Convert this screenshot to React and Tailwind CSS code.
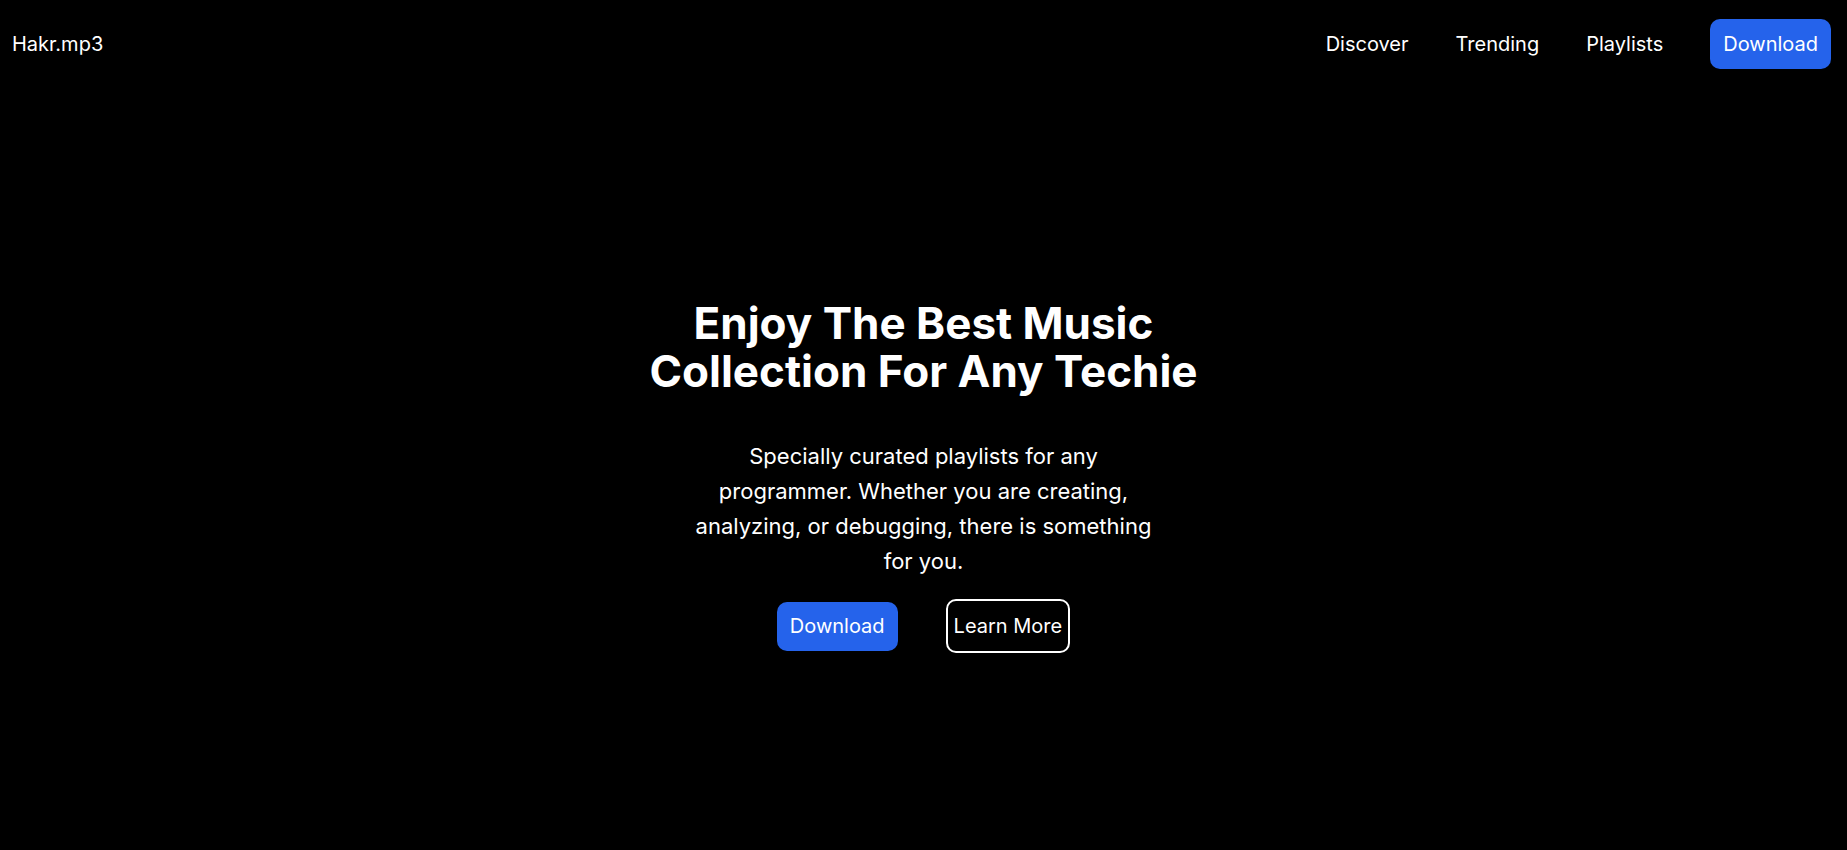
export default function App() {
  return (
    <div
      className="min-h-screen flex flex-col bg-black text-white"
      style={{ fontFamily: 'Inter, "Noto Sans", sans-serif' }}
    >
      {/* Header */}
      <header className="flex items-center justify-between pl-3 pr-4 py-[19px]">
        <a href="#" className="text-xl">Hakr.mp3</a>
        <nav className="flex items-center gap-[47px] text-xl">
          <a href="#">Discover</a>
          <a href="#">Trending</a>
          <a href="#">Playlists</a>
          <a href="#" className="h-[50px] px-[13px] flex items-center rounded-[10px] bg-[#2563eb]">
            Download
          </a>
        </nav>
      </header>

      {/* Hero */}
      <main className="flex-1 flex flex-col items-center justify-center text-center pt-[14px]">
        <h1 className="max-w-[600px] text-[44px] leading-[48px] font-bold">
          Enjoy The Best Music Collection For Any Techie
        </h1>
        <p className="mt-11 max-w-[465px] text-[22px] leading-[35px]">
          Specially curated playlists for any programmer. Whether you are creating,
          analyzing, or debugging, there is something for you.
        </p>
        <div className="mt-5 flex items-center gap-12 text-xl">
          <a href="#" className="h-[49px] px-[13px] flex items-center rounded-[10px] bg-[#2563eb]">
            Download
          </a>
          <a href="#" className="h-[54px] px-[6px] flex items-center rounded-[10px] border-2 border-white">
            Learn More
          </a>
        </div>
      </main>
    </div>
  );
}
